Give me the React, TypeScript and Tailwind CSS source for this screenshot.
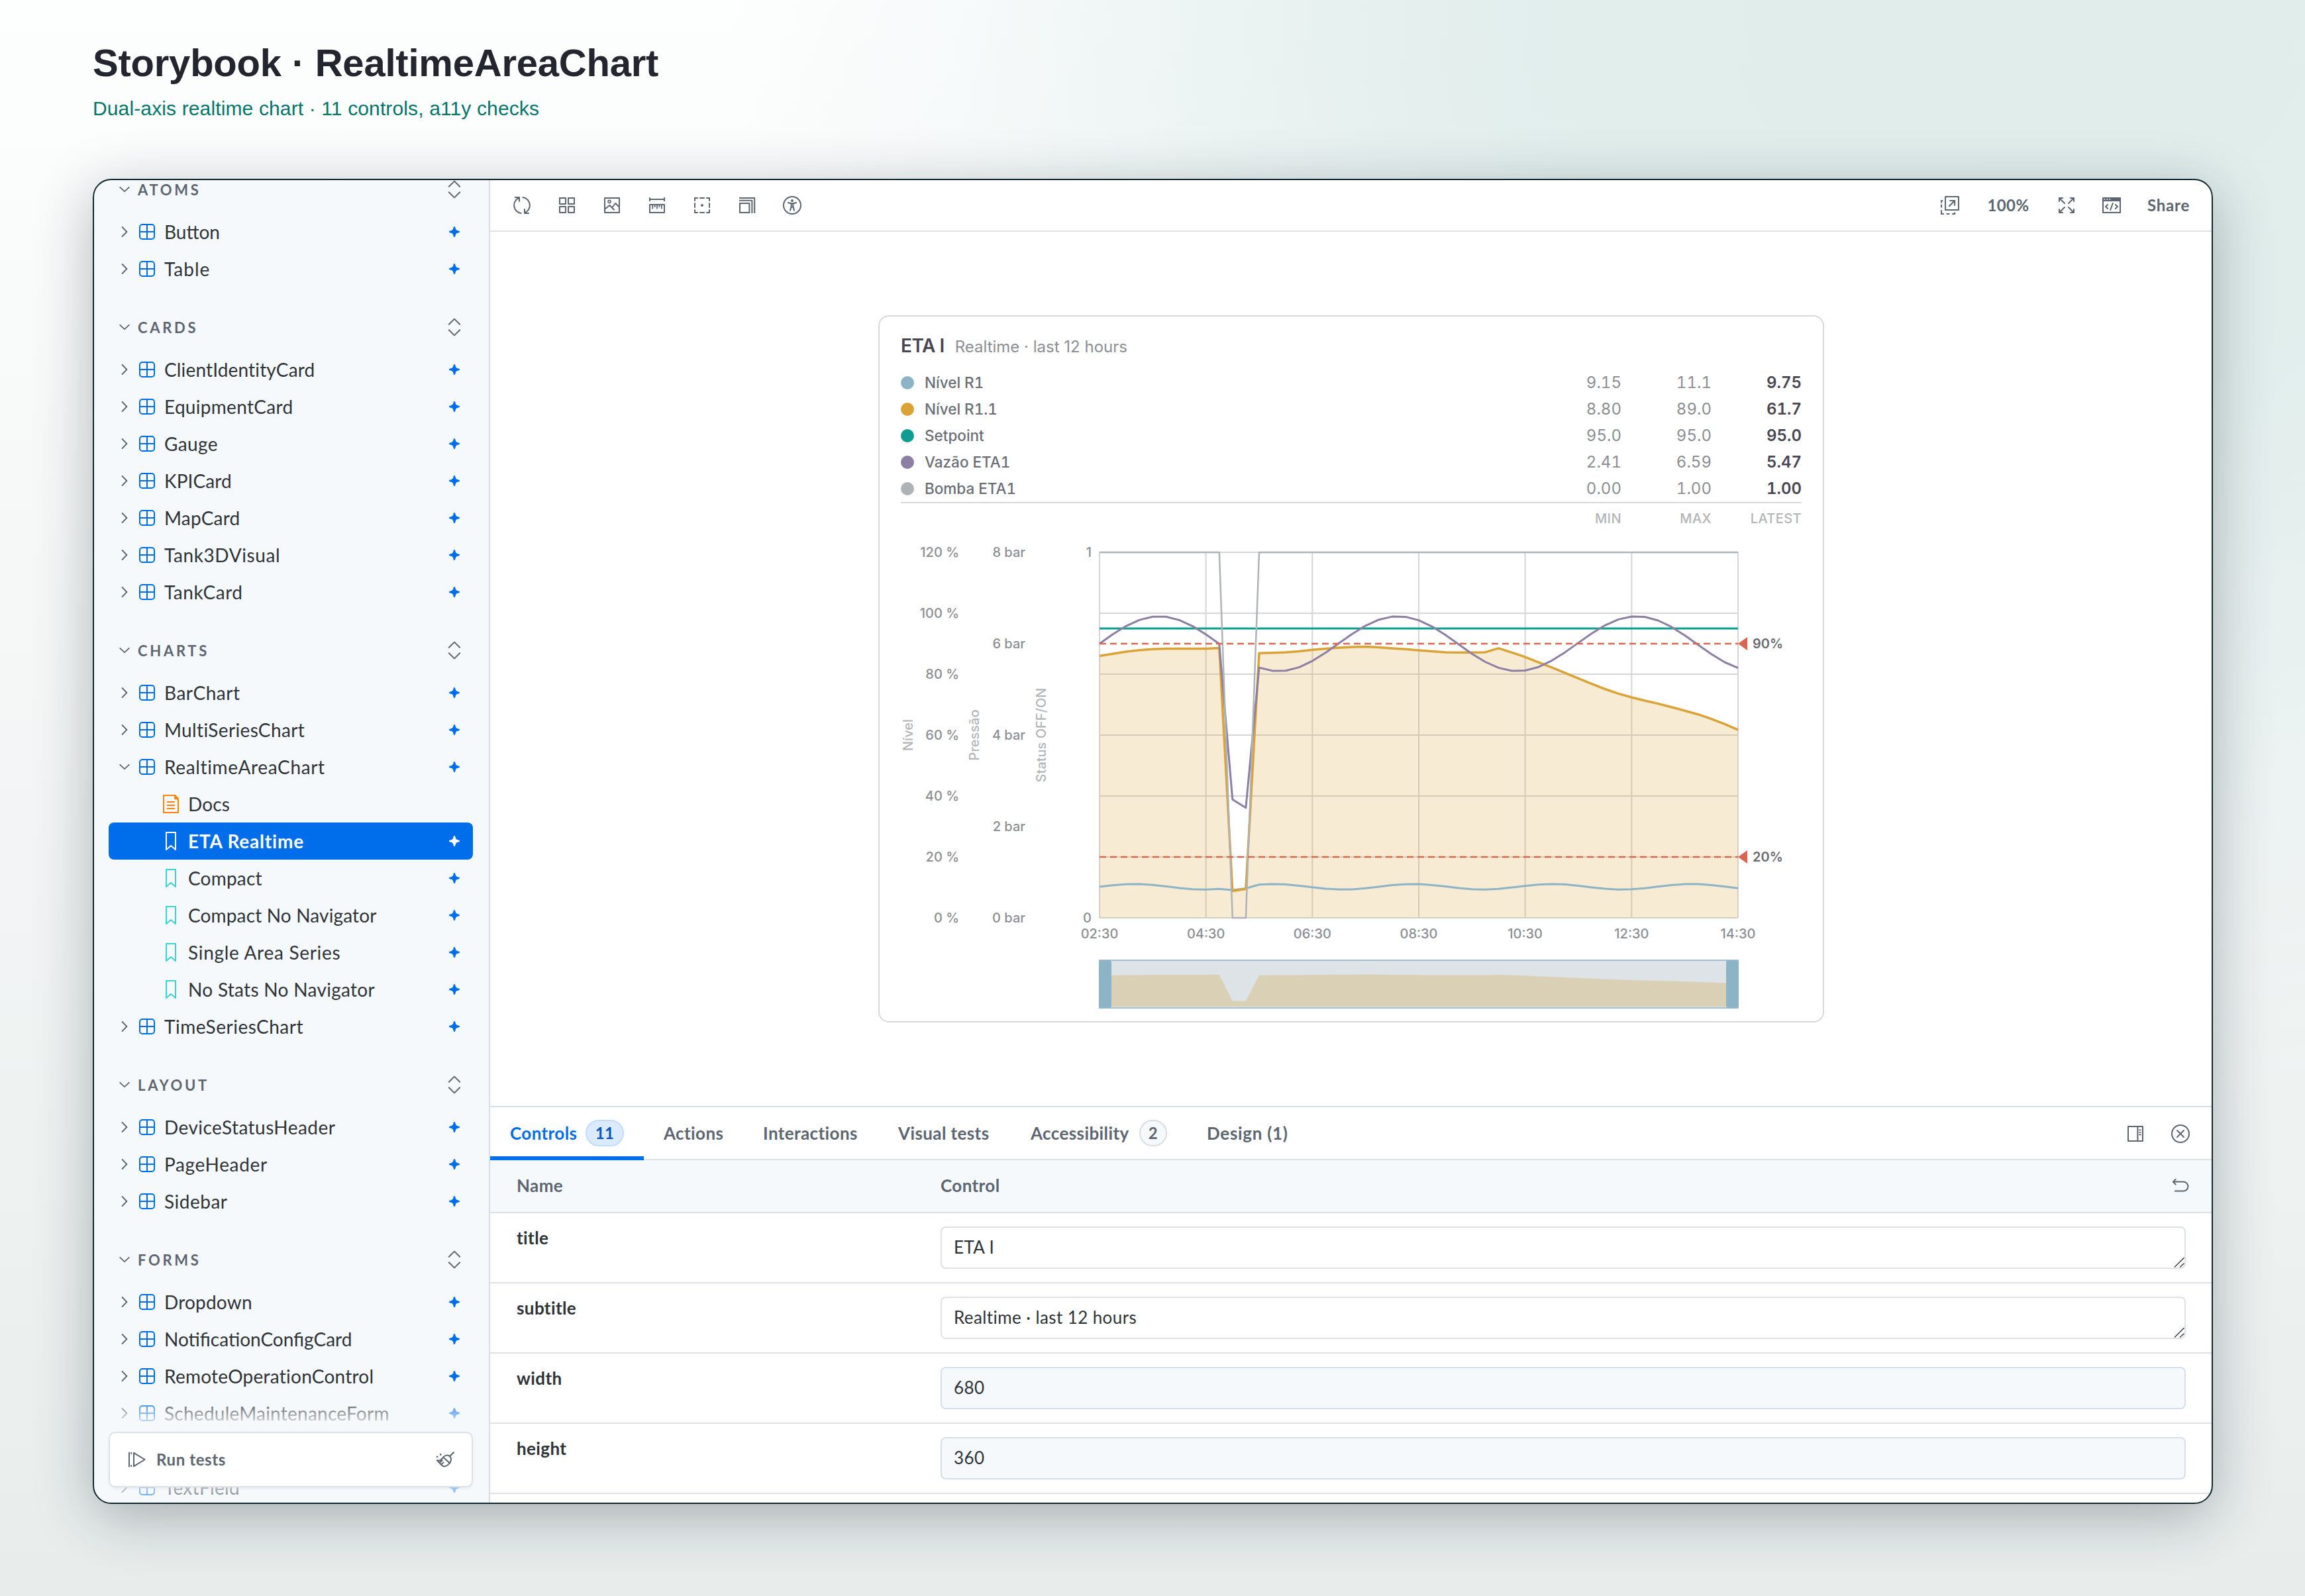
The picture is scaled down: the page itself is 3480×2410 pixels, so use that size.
import React from "react";

type IconProps = { size?: number; className?: string; children: React.ReactNode };

function Icon({ size = 28, className = "", children }: IconProps) {
  return (
    <svg
      width={size}
      height={size}
      viewBox="0 0 14 14"
      fill="none"
      stroke="currentColor"
      strokeWidth={1}
      strokeLinecap="round"
      strokeLinejoin="round"
      className={"block shrink-0 " + className}
    >
      {children}
    </svg>
  );
}

const SyncIcon = () => (
  <Icon>
    <path d="M6.3 12.95A6 6 0 0 1 4.9 1.4M1.9.95H5v3.1M7.7 1.05A6 6 0 0 1 9.1 12.6M12.1 13.05H9v-3.1" />
  </Icon>
);
const GridIcon = () => (
  <Icon>
    <path d="M1.5 1.5H6V6H1.5zM8 1.5h4.5V6H8zM1.5 8H6v4.5H1.5zM8 8h4.5v4.5H8z" />
  </Icon>
);
const PhotoIcon = () => (
  <Icon>
    <rect x="1.5" y="1.5" width="11" height="11" />
    <circle cx="5" cy="4.2" r="1" strokeWidth={0.8} />
    <path d="M1.6 9.9 5.2 7l3.6 3.6M7.2 8.5l2.4-3 2.9 2.9" strokeLinecap="butt" />
  </Icon>
);
const RulerIcon = () => (
  <Icon>
    <path d="M1.5 1.5v2.1M12.5 1.5v2.1M1.5 2.5h11M1.5 6.5h11v6h-11z" />
    <path d="M3.6 6.5v3.2M5.3 6.5v2M7 6.5v3.2M8.7 6.5v2M10.4 6.5v3.2" strokeWidth={0.9} strokeLinecap="butt" />
  </Icon>
);
const OutlineIcon = () => (
  <Icon>
    <path
      strokeLinecap="butt"
      d="M1 1.5h2.9M5.1 1.5h3.8M10.1 1.5H13M1 12.5h2.9M5.1 12.5h3.8M10.1 12.5H13M1.5 1v2.9M1.5 5.1v3.8M1.5 10.1V13M12.5 1v2.9M12.5 5.1v3.8M12.5 10.1V13"
    />
    <circle cx="7" cy="7" r="1" fill="currentColor" stroke="none" />
  </Icon>
);
const StackIcon = () => (
  <Icon>
    <path strokeLinecap="butt" d="M1.5 5.5h7.2v7H1.5zM1 3.4h9.7V13M1 1.5h11.6V13" />
  </Icon>
);
const A11yIcon = () => (
  <Icon>
    <circle cx="7" cy="7" r="6.5" />
    <circle cx="7" cy="3.5" r="1" fill="currentColor" stroke="none" />
    <path d="M3.9 5c2 .8 4.2.8 6.2 0M6.4 5.6c.1 2-.3 3.8-.9 5.2M7.6 5.6c-.1 2 .3 3.8.9 5.2M6.3 8.2h1.4" />
  </Icon>
);
const OpenIcon = () => (
  <Icon>
    <rect x="3.5" y=".5" width="10" height="10" />
    <path d="M6.4 7.6l4.2-4.1M7.1 3.5h3.5V7" />
    <path
      strokeLinecap="butt"
      d="M1.6 3.5H.5v1.7M.5 6.4v2.3M.5 10.6v2.9h1.9M4.3 13.5h2.4M8.6 13.5h2v-1.3"
    />
  </Icon>
);
const ExpandIcon = () => (
  <Icon>
    <path d="M1.5 4V1.5H4M1.5 1.5l4 4M10 1.5h2.5V4M12.5 1.5l-4 4M1.5 10v2.5H4M1.5 12.5l4-4M12.5 10v2.5H10M12.5 12.5l-4-4" />
  </Icon>
);
const CodeIcon = () => (
  <Icon>
    <path d="M.5 1.5h13v11H.5z" />
    <path d="M.5 1.5h13V4H.5z" fill="currentColor" stroke="none" />
    <path d="M1.2 2.5h.9M3.200 2.500h.9M5.200 2.500h.9" stroke="#fff" strokeWidth={0.8} strokeLinecap="butt" />
    <path d="M4.100 6.500 2.500 8l1.600 1.500M9.900 6.500 11.500 8 9.900 9.500M7.900 5.500l-1.800 5" />
  </Icon>
);
const PanelRightIcon = () => (
  <Icon>
    <path d="M1.5 1.5h11v11h-11zM8.7 1.5v11" />
    <path d="M9.9 4.1h1.2M9.9 5.9h1.2M9.9 7.7h1.2" strokeWidth={0.8} />
  </Icon>
);
const CloseIcon = () => (
  <Icon>
    <circle cx="7" cy="7" r="6.5" />
    <path d="M4.5 4.5l5 5M9.5 4.5l-5 5" />
  </Icon>
);
const UndoIcon = () => (
  <Icon>
    <path d="M3.4 2.3 1.4 4.3l2 2M1.6 4.3h7.6a3.5 3.5 0 0 1 0 7H2.9" />
  </Icon>
);
const ComponentIcon = () => (
  <Icon className="text-[#006deb]">
    <rect x="1.5" y="1.5" width="11" height="11" rx="2" />
    <path d="M7 1.5v11M1.5 7h11" />
  </Icon>
);
const DocIcon = () => (
  <Icon className="text-[#ff8300]">
    <path d="M1.5.5h8.7l2.3 2.5v10.5h-11z" />
    <path d="M9.6.4v3.2h3.2z" fill="currentColor" stroke="none" />
    <path d="M4.3 5.5h5.4M4.3 8h5.4M4.3 10.5h5.4" />
  </Icon>
);
const BookmarkIcon = ({ className }: { className: string }) => (
  <Icon className={className}>
    <path d="M3.5.5h7v13L7 10.5l-3.5 3z" />
  </Icon>
);
const StarIcon = ({ className }: { className: string }) => (
  <Icon className={className}>
    <path
      fill="currentColor"
      stroke="none"
      d="M6.4 3.5c.2-.7 1-.7 1.2 0l.4 1.4c.2.5.6.9 1.1 1.1l1.4.4c.7.2.7 1 0 1.2L9.1 8c-.5.2-.9.6-1.1 1.1l-.4 1.4c-.2.7-1 .7-1.2 0L6 9.1C5.8 8.6 5.4 8.2 4.900 8l-1.400-.4c-.7-.2-.7-1 0-1.200L4.900 6c.5-.2.900-.6 1.100-1.100z"
    />
  </Icon>
);
const ChevronDown = () => (
  <svg width="16" height="16" viewBox="0 0 16 16" fill="none" stroke="#5c6570" strokeWidth="1.8" strokeLinecap="round" strokeLinejoin="round" className="block shrink-0">
    <path d="M1.200 4.800 8 11.200 14.800 4.800" />
  </svg>
);
const ChevronRight = () => (
  <svg width="16" height="16" viewBox="0 0 16 16" fill="none" stroke="#5c6570" strokeWidth="1.8" strokeLinecap="round" strokeLinejoin="round" className="block shrink-0">
    <path d="M4.600 1 11.400 8 4.600 15" />
  </svg>
);
const ExpandAllIcon = () => (
  <Icon className="text-[#5c6570]">
    <path d="M2.900 4.900 7 .8 11.100 4.900M2.900 9.100 7 13.200 11.100 9.100" />
  </Icon>
);
const PlayAllIcon = () => (
  <Icon>
    <path d="M1.500 1.700v10.600M5 1.900v10.200L13.300 7zM3.100 1.900v.6M3.100 11.500v.6" />
  </Icon>
);
const BroomIcon = () => (
  <Icon>
    <path d="M13.500 1.500 10.400 4.600M4.900 6.100C6.800 3.400 9.200 3.200 10.600 4.600S12 8.400 9.400 10.700C7.600 12.500 5.900 12.500 4.600 11.400L.9 7.500c1.300.5 2.800.3 4-1.400zM5.900 5.500l4.700 4.200M2.800 9.300l2-1.600M4 10.700l1.700-1.400" />
    <path d="M1 4.900h.1M3.500 3.200h.1" strokeWidth={1.300} />
  </Icon>
);

type Row = { label: string; track: string; kind?: "docs" | "story"; open?: boolean; active?: boolean };
const c = (label: string, track: string): Row => ({ label, track });
const s = (label: string, track: string, active = false): Row => ({ label, track, kind: "story", active });

const groups: { title: string; rows: Row[] }[] = [
  { title: "Atoms", rows: [c("Button", "tracking-[0px]"), c("Table", "tracking-[1px]")] },
  {
    title: "Cards",
    rows: [
      c("ClientIdentityCard", "tracking-[0.15px]"),
      c("EquipmentCard", "tracking-[0.3px]"),
      c("Gauge", "tracking-[0.4px]"),
      c("KPICard", "tracking-[0.1px]"),
      c("MapCard", "tracking-[0.2px]"),
      c("Tank3DVisual", "tracking-[0.6px]"),
      c("TankCard", "tracking-[0.5px]"),
    ],
  },
  {
    title: "Charts",
    rows: [
      c("BarChart", "tracking-[0.5px]"),
      c("MultiSeriesChart", "tracking-[0.35px]"),
      { label: "RealtimeAreaChart", track: "tracking-[0.65px]", open: true },
      { label: "Docs", track: "tracking-[0.1px]", kind: "docs" },
      s("ETA Realtime", "tracking-[0.8px]", true),
      s("Compact", "tracking-[0.2px]"),
      s("Compact No Navigator", "tracking-[0.15px]"),
      s("Single Area Series", "tracking-[0.7px]"),
      s("No Stats No Navigator", "tracking-[0.3px]"),
      c("TimeSeriesChart", "tracking-[0.5px]"),
    ],
  },
  {
    title: "Layout",
    rows: [
      c("DeviceStatusHeader", "tracking-[0.45px]"),
      c("PageHeader", "tracking-[0.65px]"),
      c("Sidebar", "tracking-[0.5px]"),
    ],
  },
  {
    title: "Forms",
    rows: [
      c("Dropdown", "tracking-[0.2px]"),
      c("NotificationConfigCard", "tracking-[0px]"),
      c("RemoteOperationControl", "tracking-[0.25px]"),
      c("ScheduleMaintenanceForm", "tracking-[0.25px]"),
    ],
  },
];

function SidebarRow({ row }: { row: Row }) {
  const nested = row.kind !== undefined;
  return (
    <div
      className={
        "flex h-[56px] items-center rounded-[8px] pr-[14px] text-[28px] " +
        (row.active ? "bg-[#006deb] font-bold text-white" : "text-[#2e3338]") +
        (nested ? " pl-[80px]" : " pl-[16px]")
      }
    >
      {!nested && <div className="mr-[12px]">{row.open ? <ChevronDown /> : <ChevronRight />}</div>}
      {row.kind === "docs" ? (
        <DocIcon />
      ) : row.kind === "story" ? (
        <BookmarkIcon className={row.active ? "text-white" : "text-[#37d5d3]"} />
      ) : (
        <ComponentIcon />
      )}
      <span className={"ml-[12px] flex-1 whitespace-nowrap " + row.track}>{row.label}</span>
      {row.kind !== "docs" && <StarIcon className={row.active ? "text-white" : "text-[#006deb]"} />}
    </div>
  );
}

function Sidebar() {
  return (
    <aside className="relative h-full w-[600px] shrink-0 overflow-hidden border-r-2 border-[#d6dfe7] bg-[#f6f9fc]">
      <nav className="-mt-[12px] flex flex-col gap-[32px] px-[24px]">
        {groups.map((g) => (
          <section key={g.title}>
            <div className="mb-[8px] flex h-[56px] items-center pr-[14px] pl-[16px] text-[22px] font-bold text-[#5c6570]">
              <ChevronDown />
              <span className="ml-[12px] flex-1 tracking-[3.7px] uppercase">{g.title}</span>
              <ExpandAllIcon />
            </div>
            {g.rows.map((r) => (
              <SidebarRow key={r.label} row={r} />
            ))}
            {g.title === "Forms" && (
              <div className="mt-[56px]">
                <SidebarRow row={c("TextField", "tracking-[0.3px]")} />
              </div>
            )}
          </section>
        ))}
      </nav>
      <div className="absolute top-[1892px] left-[24px] flex h-[84px] w-[550px] items-center rounded-[10px] border-2 border-[#dde2e9] bg-white px-[26px] text-[#5c6570] shadow-[0_2px_4px_rgba(0,0,0,0.05),0_-10px_40px_20px_#f6f9fc]">
        <PlayAllIcon />
        <span className="ml-[16px] flex-1 text-[24px] font-bold tracking-[0.6px]">Run tests</span>
        <BroomIcon />
      </div>
    </aside>
  );
}

function Toolbar() {
  const left = [SyncIcon, GridIcon, PhotoIcon, RulerIcon, OutlineIcon, StackIcon, A11yIcon];
  return (
    <div className="flex h-[80px] shrink-0 items-center justify-between border-b-2 border-[#dde2e9] px-[20px] pt-[2px] text-[#5c6570]">
      <div className="flex gap-[12px]">
        {left.map((I, i) => (
          <div key={i} className="flex h-[56px] w-[56px] items-center justify-center">
            <I />
          </div>
        ))}
      </div>
      <div className="flex gap-[12px] text-[24px] font-bold tracking-[0.4px]">
        <div className="flex h-[56px] w-[56px] items-center justify-center">
          <OpenIcon />
        </div>
        <div className="flex w-[96px] items-center justify-center">100%</div>
        <div className="flex h-[56px] w-[56px] items-center justify-center">
          <ExpandIcon />
        </div>
        <div className="flex h-[56px] w-[56px] items-center justify-center">
          <CodeIcon />
        </div>
        <div className="flex w-[92px] items-center justify-center tracking-[0.8px]">Share</div>
      </div>
    </div>
  );
}

const legend = [
  { name: "Nível R1", color: "bg-[#8cb3c6]", min: "9.15", max: "11.1", latest: "9.75" },
  { name: "Nível R1.1", color: "bg-[#dba236]", min: "8.80", max: "89.0", latest: "61.7" },
  { name: "Setpoint", color: "bg-[#0d9e91]", min: "95.0", max: "95.0", latest: "95.0" },
  { name: "Vazão ETA1", color: "bg-[#8c7fa3]", min: "2.41", max: "6.59", latest: "5.47" },
  { name: "Bomba ETA1", color: "bg-[#afb3b7]", min: "0.00", max: "1.00", latest: "1.00" },
];

const LEFT = 1660;
const RIGHT = 2624;
const TOP = 834;
const BOTTOM = 1386;
const N = 48;
const px = (i: number) => LEFT + ((RIGHT - LEFT) * i) / N;
const py = (v: number, max: number) => BOTTOM - ((BOTTOM - TOP) * v) / max;
const off = (i: number) => i === 10 || i === 11;
const idx = Array.from({ length: N + 1 }, (_, i) => i);

const levelR1 = idx.map((i) => 10.2 + 0.9 * Math.sin(0.6 * i) - (off(i) ? 0.8 : 0));
const levelR11 = [
  86, 86.7, 87.4, 87.9, 88.2, 88.4, 88.4, 88.4, 88.4, 88.6, 8.8, 9.5, 86.9, 87, 87.2, 87.5, 88, 88.4, 88.7, 88.9, 89,
  88.8, 88.5, 88.2, 87.8, 87.5, 87.2, 87.1, 87.1, 87.2, 88.5, 87.1, 85.6, 83.9, 82.2, 80.4, 78.6, 76.8, 75.1, 73.6, 72.4,
  71.3, 70.3, 69.2, 68, 66.8, 65.3, 63.6, 61.7,
];
const flow = idx.map((i) => (off(i) ? 2.8 : 6) + 0.6 * Math.sin(0.35 * i));
const pump = idx.map((i) => (off(i) ? 0 : 1));

const line = (data: number[], max: number) =>
  data.map((v, i) => `${i ? "L" : "M"}${px(i).toFixed(1)} ${py(v, max).toFixed(1)}`).join("");

const navY = (v: number) => 1511.5 - (v - 8.8) * 0.497;
const navArea =
  `M${LEFT} 1520` + levelR11.map((v, i) => `L${px(i).toFixed(1)} ${navY(v).toFixed(1)}`).join("") + `L${RIGHT} 1520Z`;

const times = ["02:30", "04:30", "06:30", "08:30", "10:30", "12:30", "14:30"];

function Chart() {
  return (
    <svg
      viewBox="1328 804 1424 738"
      className="block h-[738px] w-[1424px] text-[20px] font-medium"
      fill="none"
      fontFamily="Inter"
    >
      <g stroke="#d5d6d9" strokeWidth="2">
        {[0, 20, 40, 60, 80, 100, 120].map((v) => (
          <path key={v} d={`M${LEFT} ${py(v, 120)}H${RIGHT}`} />
        ))}
        {times.map((t, i) => (
          <path key={t} d={`M${px(i * 8)} ${TOP}V${BOTTOM}`} />
        ))}
      </g>
      <path d={line(levelR11, 120) + `L${RIGHT} ${BOTTOM}L${LEFT} ${BOTTOM}Z`} fill="#dba236" fillOpacity="0.22" />
      <g strokeLinejoin="round">
        <path d={line(levelR1, 120)} stroke="#8cb3c6" strokeWidth="3" />
        <path d={line(levelR11, 120)} stroke="#dba236" strokeWidth="3.500" />
        <path d={`M${LEFT} ${py(95, 120)}H${RIGHT}`} stroke="#0d9e91" strokeWidth="3" />
        <path d={line(flow, 8)} stroke="#8c7fa3" strokeWidth="3" />
        <path d={line(pump, 1)} stroke="#afb3b7" strokeWidth="2.500" />
      </g>
      {[90, 20].map((v) => (
        <g key={v}>
          <path d={`M${LEFT} ${py(v, 120)}H${RIGHT}`} stroke="#d9674f" strokeWidth="2.400" strokeDasharray="10 6" />
          <path d={`M${RIGHT} ${py(v, 120)}l14 -10v20z`} fill="#d9674f" />
          <text x="2646" y={py(v, 120) + 6.500} fill="#6b6b72" fontWeight="600">
            {v}%
          </text>
        </g>
      ))}
      <g fill="#8c8e94" textAnchor="end">
        {[0, 20, 40, 60, 80, 100, 120].map((v) => (
          <text key={v} x="1448" y={py(v, 120) + 6.500}>
            {v} %
          </text>
        ))}
        {[0, 2, 4, 6, 8].map((v) => (
          <text key={v} x="1548" y={py(v, 8) + 6.500}>
            {v} bar
          </text>
        ))}
        {[0, 1].map((v) => (
          <text key={v} x="1648" y={py(v, 1) + 6.500}>
            {v}
          </text>
        ))}
      </g>
      <g fill="#8c8e94" textAnchor="middle">
        {times.map((t, i) => (
          <text key={t} x={px(i * 8)} y="1416.500">
            {t}
          </text>
        ))}
      </g>
      <g fill="#b3b5b9" textAnchor="middle">
        <text transform="translate(1378 1110) rotate(-90)">Nível</text>
        <text transform="translate(1478 1110) rotate(-90)">Pressão</text>
        <text transform="translate(1579 1110) rotate(-90)">Status OFF/ON</text>
      </g>
      <rect x="1660" y="1450" width="964" height="72" fill="#dde3e6" />
      <path d={navArea} fill="#dad0b5" />
      <rect x="1660" y="1450" width="964" height="72" stroke="#a4bfcc" strokeWidth="2" />
      <rect x="1659" y="1450" width="19" height="72" rx="4" fill="#8cb3c6" />
      <rect x="2606" y="1450" width="19" height="72" rx="4" fill="#8cb3c6" />
    </svg>
  );
}

function ChartCard() {
  return (
    <div className="h-[1068px] w-[1428px] rounded-[16px] border-2 border-[#d8d9dc] bg-white pt-[22px] font-['Inter',sans-serif]">
      <div className="px-[32px]">
        <div className="flex h-[44px] items-baseline gap-[16px] leading-[44px]">
          <span className="text-[28px] font-semibold tracking-[-0.5px] text-[#494653]">ETA I</span>
          <span className="text-[24px] text-[#8c8e94]">Realtime · last 12 hours</span>
        </div>
        <div className="mt-[14px] border-b-2 border-[#d8d9dc] leading-[40px]">
          {legend.map((l) => (
            <div key={l.name} className="flex h-[40px] items-center text-[24px] tabular-nums">
              <span className={"h-[20px] w-[20px] rounded-full " + l.color} />
              <span className="ml-[16px] flex-1 text-[22.5px] font-medium text-[#6b6e76]">{l.name}</span>
              <span className="w-[136px] text-right text-[#8c8e94]">{l.min}</span>
              <span className="w-[136px] text-right text-[#8c8e94]">{l.max}</span>
              <span className="w-[136px] text-right font-semibold text-[#494653]">{l.latest}</span>
            </div>
          ))}
        </div>
        <div className="flex h-[44px] justify-end text-[20px] leading-[46px] font-medium text-[#b3b5b9]">
          {["MIN", "MAX", "LATEST"].map((t) => (
            <span key={t} className="w-[136px] text-right tracking-[0.4px]">
              {t}
            </span>
          ))}
        </div>
      </div>
      <Chart />
    </div>
  );
}

const controls = [
  { name: "title", value: "ETA I", area: true },
  { name: "subtitle", value: "Realtime · last 12 hours", area: true },
  { name: "width", value: "680", area: false },
  { name: "height", value: "360", area: false },
];

function AddonPanel() {
  return (
    <div className="flex h-[600px] flex-col border-t-2 border-[#d6dfe7] tracking-[0.4px]">
      <div className="flex h-[80px] shrink-0 border-b-2 border-[#dde2e9] text-[26px] font-bold text-[#5c6570]">
        <div className="-mb-[2px] flex w-[232px] items-center border-b-[6px] border-[#006deb] pt-[4px] pl-[30px] text-[#006deb]">
          Controls
          <span className="mr-[30px] ml-auto flex h-[40px] w-[58px] items-center justify-center rounded-full border-2 border-[#bfdcfd] bg-[#dbebfd] text-[24px] text-[#0056bd]">
            11
          </span>
        </div>
        <div className="flex w-[150px] items-center pl-[30px]">Actions</div>
        <div className="flex w-[204px] items-center pl-[30px]">Interactions</div>
        <div className="flex w-[200px] items-center pl-[30px]">Visual tests</div>
        <div className="flex w-[266px] items-center pl-[30px]">
          Accessibility
          <span className="mr-[30px] ml-auto flex h-[40px] w-[42px] items-center justify-center rounded-full border-2 border-[#d8dee3] bg-[#f6f9fc] text-[24px]">
            2
          </span>
        </div>
        <div className="flex items-center pl-[30px] tracking-[0.7px]">Design (1)</div>
        <div className="ml-auto flex items-center gap-[12px] pt-[2px] pr-[20px]">
          <div className="flex w-[56px] justify-center">
            <PanelRightIcon />
          </div>
          <div className="flex w-[56px] justify-center">
            <CloseIcon />
          </div>
        </div>
      </div>
      <div className="flex h-[80px] shrink-0 items-center border-b-2 border-[#dde2e9] bg-[#f6f9fc] pr-[34px] pb-[2px] pl-[40px] text-[26px] font-bold text-[#5c6570]">
        <span className="w-[640px]">Name</span>
        <span className="flex-1">Control</span>
        <UndoIcon />
      </div>
      {controls.map((r) => (
        <div key={r.name} className="flex h-[106px] shrink-0 border-b-2 border-[#dde2e9] pt-[20px] pr-[40px] pl-[40px] text-[26px] text-[#2e3338]">
          <span className="w-[640px] leading-[34px] font-bold">{r.name}</span>
          <div
            className={
              "relative flex h-[64px] flex-1 items-center rounded-[8px] border-2 pb-[2px] pl-[18px] " +
              (r.area ? "border-[#dde2e9] bg-white" : "border-[#d6dfe7] bg-[#f6f9fc]")
            }
          >
            {r.value}
            {r.area && (
              <svg width="16" height="16" viewBox="0 0 16 16" stroke="#4d4d4d" strokeWidth="1.600" className="absolute right-0 bottom-0">
                <path d="M1 15.500 15.500 1M9 15.500 15.500 9.500" />
              </svg>
            )}
          </div>
        </div>
      ))}
    </div>
  );
}

export default function App() {
  return (
    <div className="h-[2410px] w-[3480px] overflow-hidden bg-[radial-gradient(ellipse_1950px_1650px_at_3050px_0px,rgba(224,237,235,1)_0%,rgba(224,237,235,0.97)_36%,rgba(224,237,235,0.75)_54%,rgba(224,237,235,0.5)_67%,rgba(224,237,235,0.2)_83%,rgba(224,237,235,0)_100%),linear-gradient(180deg,#fdfefe_0%,#e8edec_100%)]">
      <header className="h-[270px] pt-[66px] pl-[140px] font-['Liberation_Sans',Arial,sans-serif]">
        <h1 className="text-[58px] leading-[58px] font-bold tracking-[-0.22px] text-[#23252f]">Storybook · RealtimeAreaChart</h1>
        <p className="mt-[25px] text-[30px] leading-[30px] tracking-[0.13px] text-[#03756a]">Dual-axis realtime chart · 11 controls, a11y checks</p>
      </header>
      <div className="relative ml-[140px] h-[2001px] w-[3201px] rounded-[28px] shadow-[0_20px_88px_rgba(15,25,35,0.3)]">
        <div className="flex h-full overflow-hidden rounded-[28px] bg-white font-['Lato',sans-serif]">
          <Sidebar />
          <main className="flex w-[2600px] shrink-0 flex-col">
            <Toolbar />
            <div className="flex h-[1320px] shrink-0 items-center justify-center">
              <ChartCard />
            </div>
            <AddonPanel />
          </main>
        </div>
        <div className="pointer-events-none absolute inset-0 rounded-[28px] border-2 border-[#11262c]" />
      </div>
    </div>
  );
}
